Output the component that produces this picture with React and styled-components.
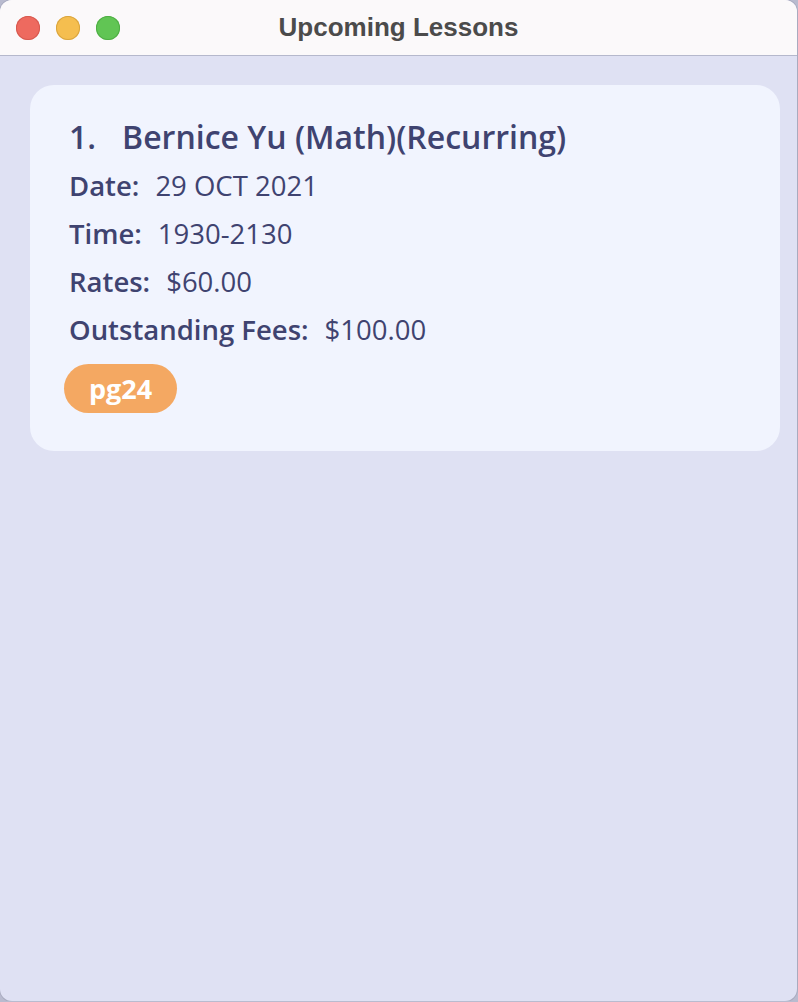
import React from "react";
import styled, { createGlobalStyle } from "styled-components";

const Global = createGlobalStyle`
  html, body {
    margin: 0;
    padding: 0;
    background: #b9bbcf;
  }
  body {
    font-family: "Open Sans", "Noto Sans", sans-serif;
  }
`;

const Window = styled.div`
  width: 797px;
  height: 1001px;
  border-radius: 12px;
  overflow: hidden;
  display: flex;
  flex-direction: column;
  background: #dfe1f3;
  box-shadow: 0 0 0 1px #a9abbf;
`;

const TitleBar = styled.div`
  height: 56px;
  flex-shrink: 0;
  background: #fbf9fa;
  border-bottom: 1px solid #b5b8cc;
  display: grid;
  grid-template-columns: 1fr auto 1fr;
  align-items: center;
  padding: 0 16px;
  box-sizing: border-box;
`;

const Lights = styled.div`
  display: flex;
  gap: 16px;
`;

const Light = styled.span`
  width: 24px;
  height: 24px;
  border-radius: 50%;
  background: ${({ $color }) => $color};
  box-shadow: inset 0 0 0 1px ${({ $edge }) => $edge};
`;

const WindowTitle = styled.div`
  font-family: "Liberation Sans", "Inter", sans-serif;
  font-weight: 700;
  font-size: 26px;
  color: #4b4b4b;
`;

const Content = styled.div`
  flex: 1;
  padding: 29px 17px 0 30px;
`;

const Card = styled.div`
  background: #f1f4fe;
  border-radius: 24px;
  padding: 29px 39px 38px;
  display: flex;
  flex-direction: column;
  color: #3f4370;
`;

const Heading = styled.div`
  font-size: 32px;
  font-weight: 600;
  line-height: 46px;
  display: flex;
  gap: 26px;
  margin-bottom: 2px;
`;

const Field = styled.div`
  font-size: 27.5px;
  line-height: 48px;
`;

const Label = styled.span`
  font-weight: 600;
  margin-right: 16px;
`;

const Tags = styled.div`
  display: flex;
  gap: 8px;
  margin-top: 10px;
  margin-left: -5px;
`;

const Tag = styled.span`
  background: #f4a862;
  color: #ffffff;
  font-weight: 700;
  font-size: 27px;
  line-height: 49px;
  padding: 0 25px;
  border-radius: 25px;
`;

const lesson = {
  index: 1,
  name: "Bernice Yu (Math)(Recurring)",
  fields: [
    ["Date:", "29 OCT 2021"],
    ["Time:", "1930-2130"],
    ["Rates:", "$60.00"],
    ["Outstanding Fees:", "$100.00"],
  ],
  tags: ["pg24"],
};

export default function App() {
  return (
    <>
      <Global />
      <Window>
        <TitleBar>
          <Lights>
            <Light $color="#ee6a5f" $edge="#d65a50" />
            <Light $color="#f5be4f" $edge="#d9a53f" />
            <Light $color="#61c554" $edge="#4fae44" />
          </Lights>
          <WindowTitle>Upcoming Lessons</WindowTitle>
          <span />
        </TitleBar>
        <Content>
          <Card>
            <Heading>
              <span>{lesson.index}.</span>
              <span>{lesson.name}</span>
            </Heading>
            {lesson.fields.map(([label, value]) => (
              <Field key={label}>
                <Label>{label}</Label>
                {value}
              </Field>
            ))}
            <Tags>
              {lesson.tags.map((t) => (
                <Tag key={t}>{t}</Tag>
              ))}
            </Tags>
          </Card>
        </Content>
      </Window>
    </>
  );
}
